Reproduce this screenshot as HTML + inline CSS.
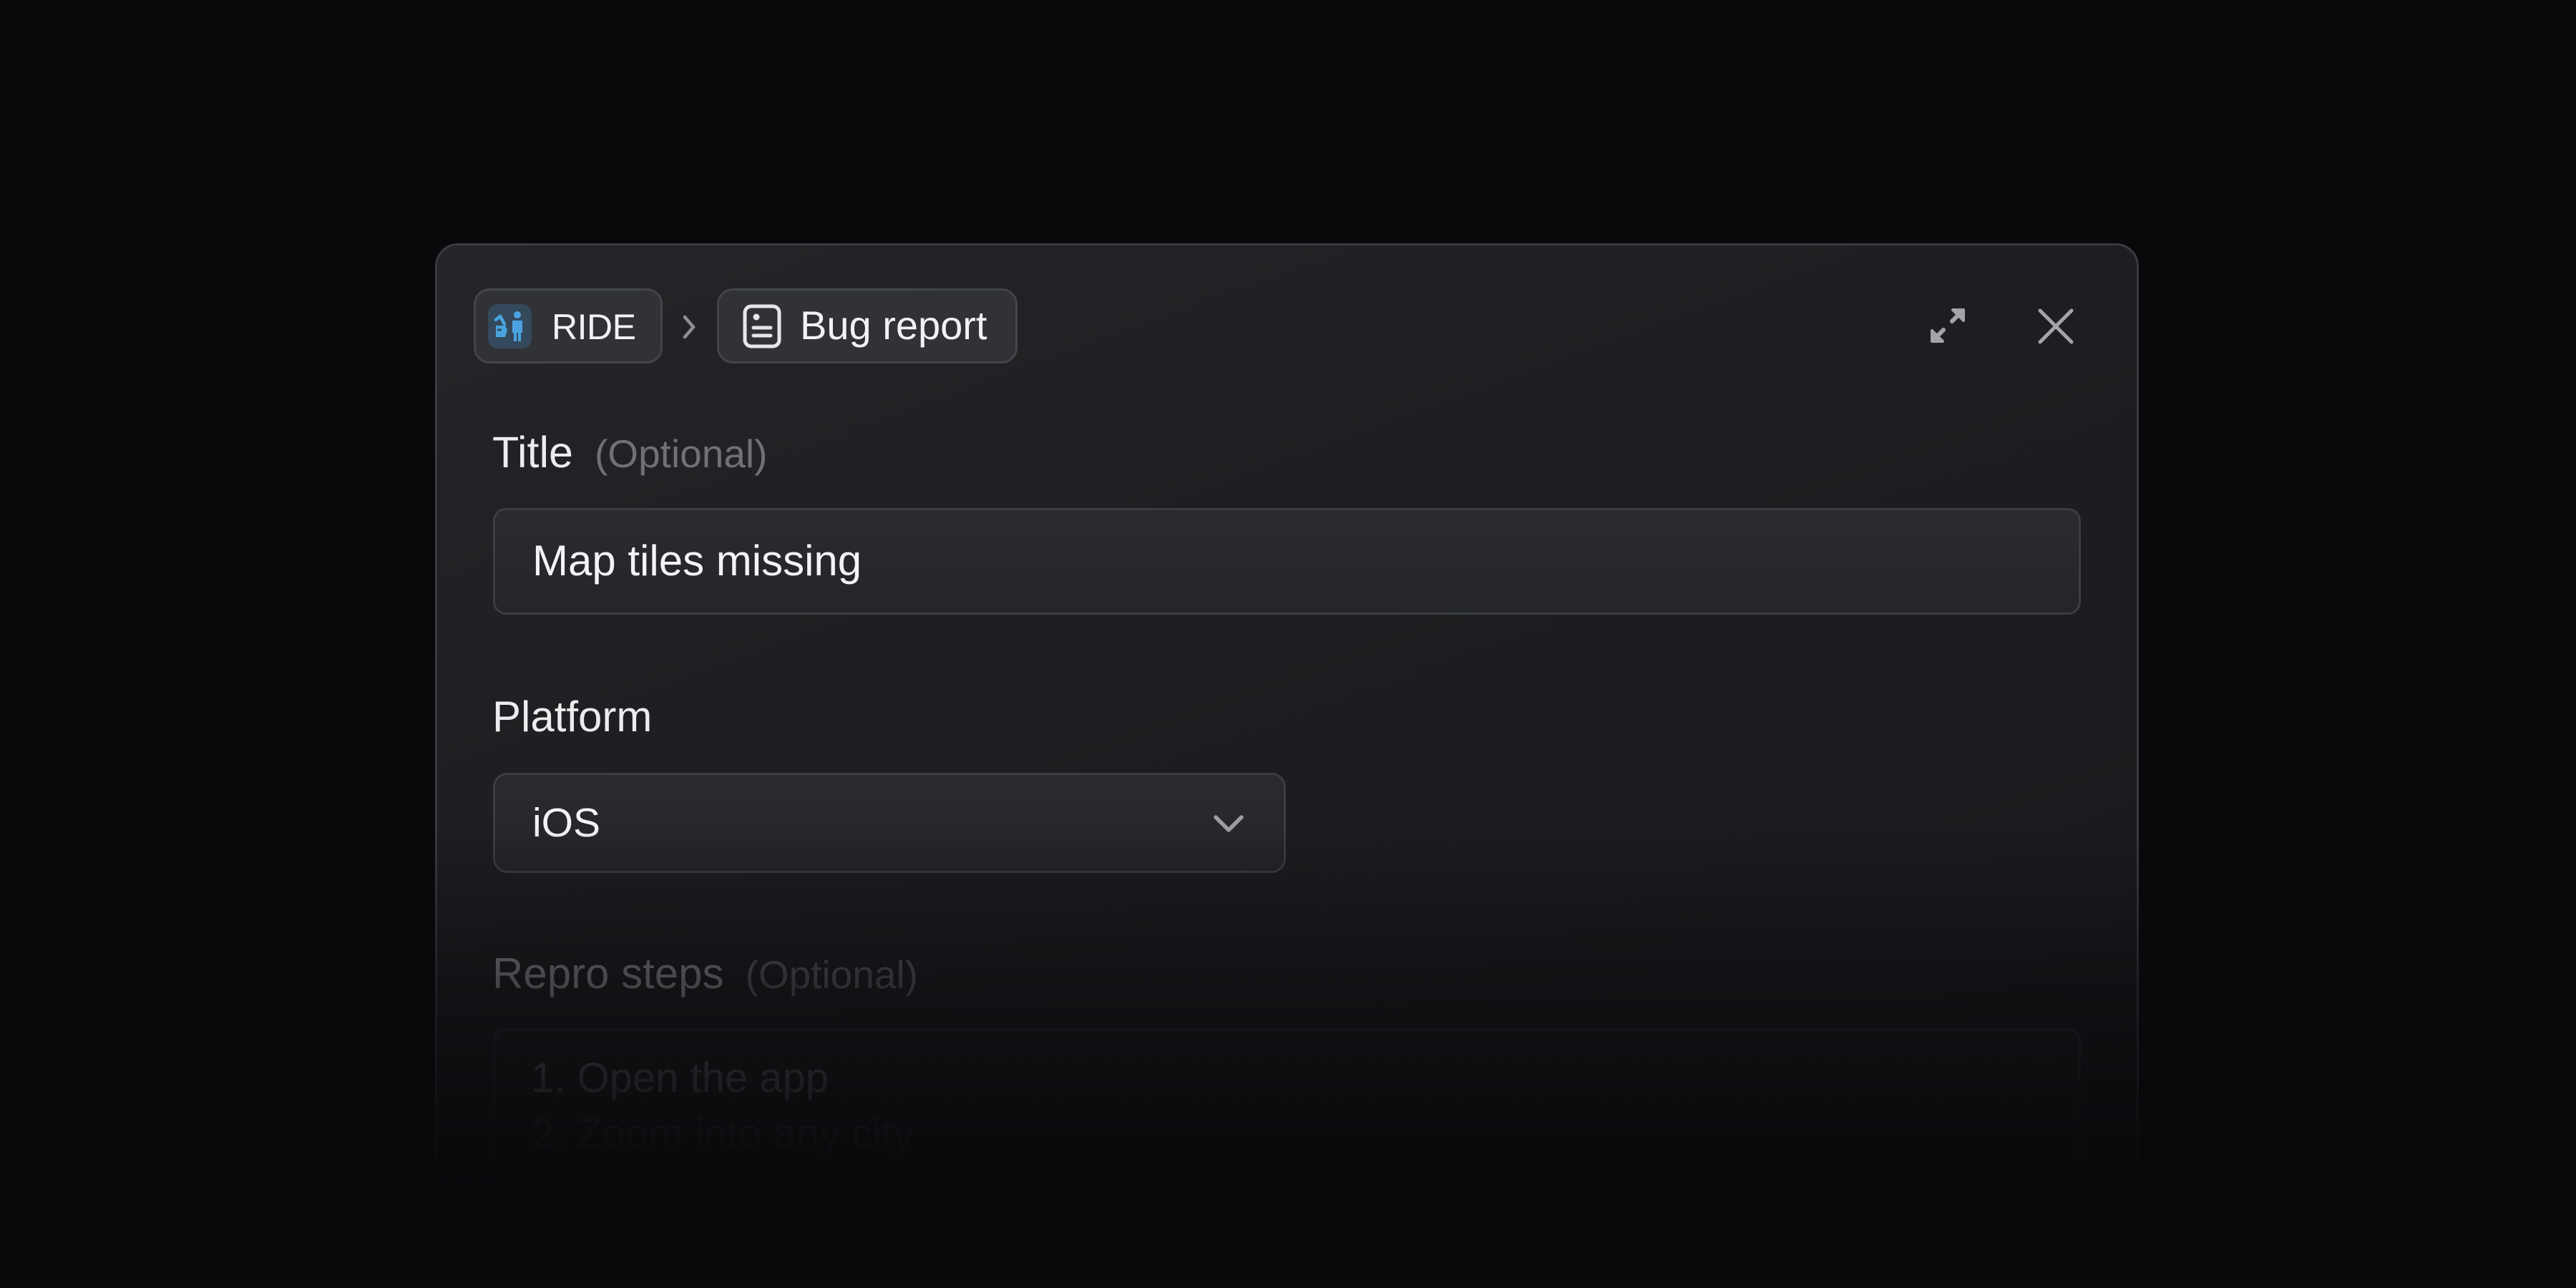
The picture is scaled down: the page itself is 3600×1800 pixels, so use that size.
<!DOCTYPE html>
<html><head><meta charset="utf-8"><style>
*{margin:0;padding:0;box-sizing:border-box}
html,body{width:3600px;height:1800px;overflow:hidden;background:#08090b;font-family:"Liberation Sans",sans-serif}
.abs{position:absolute}
.card{left:608px;top:340px;width:2381px;height:1400px;border:3px solid #3a3b40;border-radius:32px;background:linear-gradient(160deg,#242528 0%,#1d1e21 40%,#18191c 100%)}
.pill{top:403px;height:105px;border:3px solid #43454b;border-radius:22px;background:#313237}
.t{white-space:nowrap;line-height:1}
.field{border:3px solid #3c3d43;background:linear-gradient(180deg,#2a2b30,#242529);border-radius:18px}
.fade{left:0;top:1150px;width:3600px;height:650px;background:linear-gradient(180deg,rgba(8,9,11,0) 0%,rgba(8,9,11,0.55) 35%,rgba(8,9,11,0.93) 68%,#08090b 80%)}
</style></head><body>
<div class="abs card"></div>
<div class="abs pill" style="left:662px;width:264px"></div>
<div class="abs" style="left:682px;top:425px;width:61px;height:62px;border-radius:14px;background:#34495c"></div>
<svg class="abs" style="left:682px;top:425px" width="61" height="62" viewBox="0 0 61 62">
<path d="M11 22 L17 17 L23 28" fill="none" stroke="#4aa3e0" stroke-width="4.5" stroke-linecap="round" stroke-linejoin="round"/>
<path d="M11 30 L24 30 L27 36 L24 46 L11 46 Z" fill="#4aa3e0"/>
<path d="M13 36 h6" stroke="#34495c" stroke-width="3"/>
<circle cx="41" cy="15" r="5" fill="#4aa3e0"/>
<path d="M34 23 h14 v17 h-2 v12 h-4 v-12 h-2 v12 h-4 v-12 h-2z" fill="#4aa3e0"/>
</svg>
<div class="abs t" style="left:771px;top:432px;font-size:50px;color:#f2f2f4;letter-spacing:-0.5px">RIDE</div>
<svg class="abs" style="left:950px;top:437px" width="26" height="40" viewBox="0 0 26 40"><path d="M7 6 L19 20 L7 34" fill="none" stroke="#8d8e93" stroke-width="4.5" stroke-linecap="round"/></svg>
<div class="abs pill" style="left:1002px;width:420px"></div>
<svg class="abs" style="left:1036px;top:423px" width="58" height="66" viewBox="0 0 58 66">
<rect x="5" y="5" width="48" height="56" rx="9" fill="none" stroke="#e6e6e8" stroke-width="5"/>
<circle cx="21" cy="20" r="4.5" fill="#e6e6e8"/>
<path d="M17 35 H41 M17 46 H41" stroke="#e6e6e8" stroke-width="5" stroke-linecap="round"/>
</svg>
<div class="abs t" style="left:1118px;top:427px;font-size:56px;color:#f2f2f4">Bug report</div>
<svg class="abs" style="left:2692px;top:425px" width="60" height="60" viewBox="0 0 60 60">
<path d="M36 24 L46 14 M24 36 L14 46" stroke="#a3a4a8" stroke-width="6" stroke-linecap="round"/>
<path d="M37 8 H52 V23 Z" fill="#a3a4a8" stroke="#a3a4a8" stroke-width="4" stroke-linejoin="round"/>
<path d="M8 37 V52 H23 Z" fill="#a3a4a8" stroke="#a3a4a8" stroke-width="4" stroke-linejoin="round"/>
</svg>
<svg class="abs" style="left:2845px;top:428px" width="56" height="56" viewBox="0 0 56 56"><path d="M6 6 L50 50 M50 6 L6 50" stroke="#a3a4a8" stroke-width="5" stroke-linecap="round"/></svg>

<div class="abs t" style="left:688px;top:602px;font-size:61px;color:#ececee">Title<span style="font-size:55px;color:#707075;margin-left:30px">(Optional)</span></div>
<div class="abs field" style="left:689px;top:710px;width:2219px;height:149px"></div>
<div class="abs t" style="left:744px;top:754px;font-size:60px;color:#f4f4f6">Map tiles missing</div>

<div class="abs t" style="left:688px;top:972px;font-size:60px;color:#ececee">Platform</div>
<div class="abs field" style="left:689px;top:1080px;width:1108px;height:140px;border-radius:20px"></div>
<div class="abs t" style="left:744px;top:1122px;font-size:57px;color:#f4f4f6">iOS</div>
<svg class="abs" style="left:1692px;top:1134px" width="50" height="34" viewBox="0 0 50 34"><path d="M7 8 L25 26 L43 8" fill="none" stroke="#9c9da1" stroke-width="5.5" stroke-linecap="round" stroke-linejoin="round"/></svg>

<div class="abs t" style="left:688px;top:1331px;font-size:60px;color:#8c8c90">Repro steps<span style="font-size:55px;color:#5a5a5e;margin-left:30px">(Optional)</span></div>
<div class="abs field" style="left:689px;top:1437px;width:2219px;height:300px;background:#1d1e21;border-color:#2c2d31"></div>
<div class="abs t" style="left:742px;top:1478px;font-size:58px;color:#6a6b70">1. Open the app</div>
<div class="abs t" style="left:742px;top:1556px;font-size:58px;color:#4a4b50">2. Zoom into any city</div>
<div class="abs fade"></div>
</body></html>
